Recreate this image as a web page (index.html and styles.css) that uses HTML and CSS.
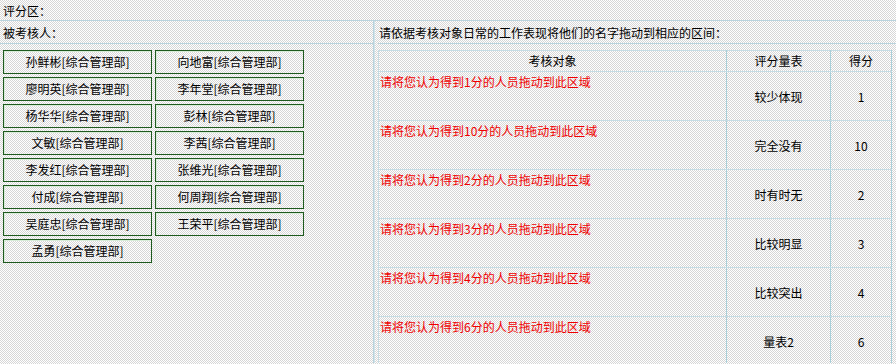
FILE: index.html
```html
<!DOCTYPE html>
<html lang="zh-CN">
<head>
    <meta charset="UTF-8">
    <title>评分区</title>
    <link rel="stylesheet" href="styles.css">
</head>
<body>

    <div class="title-row">评分区：</div>

    <div class="main">
        <div class="left-col">
            <div class="col-head">被考核人：</div>
            <div class="people">
                <div class="person">孙鲜彬[综合管理部]</div>
                <div class="person">向地富[综合管理部]</div>
                <div class="person">廖明英[综合管理部]</div>
                <div class="person">李年堂[综合管理部]</div>
                <div class="person">杨华华[综合管理部]</div>
                <div class="person">彭林[综合管理部]</div>
                <div class="person">文敏[综合管理部]</div>
                <div class="person">李茜[综合管理部]</div>
                <div class="person">李发红[综合管理部]</div>
                <div class="person">张维光[综合管理部]</div>
                <div class="person">付成[综合管理部]</div>
                <div class="person">何周翔[综合管理部]</div>
                <div class="person">吴庭忠[综合管理部]</div>
                <div class="person">王荣平[综合管理部]</div>
                <div class="person">孟勇[综合管理部]</div>
            </div>
        </div>

        <div class="right-col">
            <div class="col-head">请依据考核对象日常的工作表现将他们的名字拖动到相应的区间：</div>
            <table class="score-table">
                <tr>
                    <th class="c-target">考核对象</th>
                    <th class="c-scale">评分量表</th>
                    <th class="c-score">得分</th>
                </tr>
                <tr>
                    <td class="drop">请将您认为得到1分的人员拖动到此区域</td>
                    <td class="scale">较少体现</td>
                    <td class="score">1</td>
                </tr>
                <tr>
                    <td class="drop">请将您认为得到10分的人员拖动到此区域</td>
                    <td class="scale">完全没有</td>
                    <td class="score">10</td>
                </tr>
                <tr>
                    <td class="drop">请将您认为得到2分的人员拖动到此区域</td>
                    <td class="scale">时有时无</td>
                    <td class="score">2</td>
                </tr>
                <tr>
                    <td class="drop">请将您认为得到3分的人员拖动到此区域</td>
                    <td class="scale">比较明显</td>
                    <td class="score">3</td>
                </tr>
                <tr>
                    <td class="drop">请将您认为得到4分的人员拖动到此区域</td>
                    <td class="scale">比较突出</td>
                    <td class="score">4</td>
                </tr>
                <tr>
                    <td class="drop">请将您认为得到6分的人员拖动到此区域</td>
                    <td class="scale">量表2</td>
                    <td class="score">6</td>
                </tr>
            </table>
        </div>
    </div>

</body>
</html>
```

FILE: styles.css
```css
/* dithered grey page, like the old gif background */
body {
    margin: 0;
    padding: 0;
    font-family: "Noto Sans CJK SC", "Liberation Sans", sans-serif;
    font-size: 12px;
    line-height: 16px;
    color: #000;
    background: repeating-conic-gradient(#ffffff 0 25%, #d6d6d6 0 50%) 0 0 / 2px 2px;
    overflow: hidden;
}

.title-row {
    height: 21px;
    padding: 3px 0 0 3px;
    box-sizing: border-box;
    border-bottom: 1px solid #b9d3dd;
}

.main {
    display: flex;
    height: 342px;
}

.left-col {
    width: 374px;
    box-sizing: border-box;
    border-right: 1px solid #b9d3dd;
}

.right-col {
    flex: 1;
    padding-left: 3px;
    border-left: 1px solid #cfe3ea;
}

.col-head {
    height: 23px;
    padding: 4px 0 0 3px;
    box-sizing: border-box;
    border-bottom: 1px solid #b9d3dd;
}

.right-col .col-head {
    padding-left: 1px;
}

.people {
    display: grid;
    grid-template-columns: 149px 149px;
    grid-auto-rows: 24px;
    gap: 3px;
    padding: 6px 0 0 3px;
}

.person {
    border: 1px solid #1f5a1f;
    box-shadow: inset 1px 1px 0 #d8ecd8;
    display: flex;
    align-items: center;
    justify-content: center;
    cursor: move;
}

.score-table {
    margin-top: 6px;
    width: 514px;
    border-collapse: collapse;
    border-left: 1px solid #c5dce4;
    border-top: 1px solid #c5dce4;
}

.score-table th {
    font-weight: normal;
    height: 20px;
    padding: 0;
    text-align: center;
    border-right: 1px solid #a9cfd9;
    border-bottom: 1px solid #c5dce4;
}

.c-target {
    width: 347px;
}

.c-scale {
    width: 103px;
}

.score-table td {
    height: 46px;
    padding: 0;
    border-right: 1px solid #a9cfd9;
    border-bottom: 1px solid #c5dce4;
}

.drop {
    color: #f00000;
    vertical-align: top;
    padding-left: 1px !important;
    padding-top: 2px !important;
}

.scale, .score {
    text-align: center;
    vertical-align: middle;
    padding-top: 2px !important;
}
```
